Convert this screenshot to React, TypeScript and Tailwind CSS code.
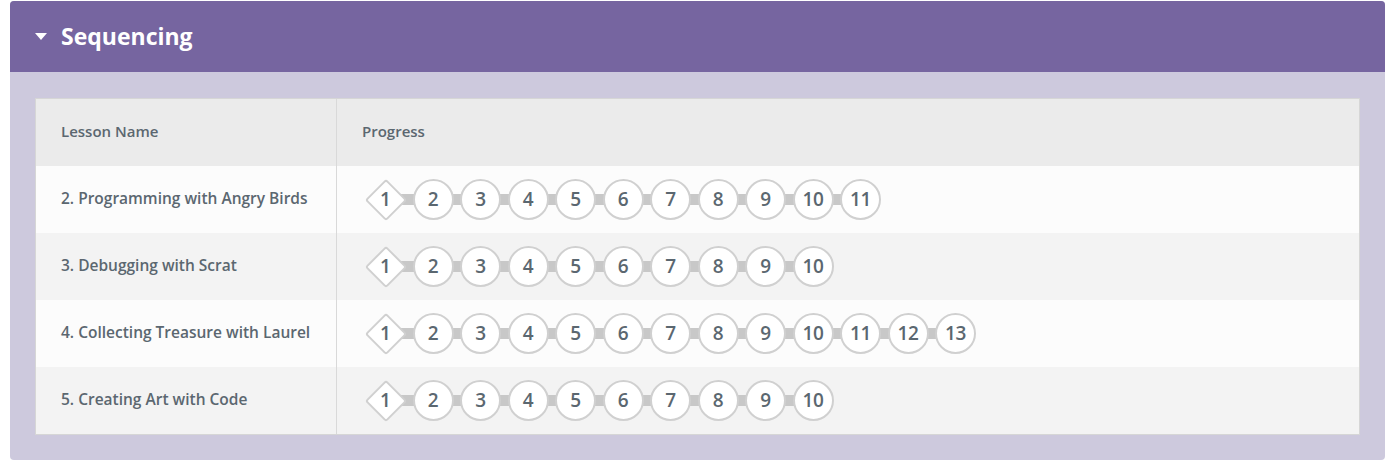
import React from "react";

const lessons = [
  { name: "2. Programming with Angry Birds", count: 11 },
  { name: "3. Debugging with Scrat", count: 10 },
  { name: "4. Collecting Treasure with Laurel", count: 13 },
  { name: "5. Creating Art with Code", count: 10 },
];

const font = { fontFamily: "'Open Sans', 'Liberation Sans', sans-serif" };

const Bubble = ({ n, first }: { n: number; first: boolean }) => {
  if (first) {
    return (
      <div className="relative w-[41px] h-[41px] flex items-center justify-center shrink-0">
        <div className="absolute w-[30px] h-[30px] rotate-45 bg-white border-2 border-[#d0d0d0] rounded-[3px]" />
        <span className="relative text-[19px] font-semibold text-[#5b6770]">{n}</span>
      </div>
    );
  }
  return (
    <div className="relative w-[41px] h-[41px] rounded-full bg-white border-2 border-[#d0d0d0] flex items-center justify-center shrink-0">
      <span className="text-[19px] font-semibold text-[#5b6770] tracking-[-0.3px]">{n}</span>
    </div>
  );
};

const Progress = ({ count }: { count: number }) => {
  const items = Array.from({ length: count }, (_, i) => i + 1);
  return (
    <div className="relative flex items-center gap-[6.5px]">
      <div className="absolute left-[20px] h-[11px] bg-[#c8c8c8]" style={{ width: (count - 1) * 47.5 }} />
      {items.map((n) => (
        <Bubble key={n} n={n} first={n === 1} />
      ))}
    </div>
  );
};

export default function App() {
  return (
    <div className="w-[1392px] h-[472px] bg-white pt-[1px] pl-[10px]" style={font}>
      <div className="w-[1375px] rounded-[4px] overflow-hidden bg-[#cdc9dd]">
        <div className="h-[71px] bg-[#7665a0] flex items-center pl-[25px] gap-[14px]">
          <svg width="12" height="8" viewBox="0 0 12 8">
            <path d="M0 0 L12 0 L6 7 Z" fill="#ffffff" />
          </svg>
          <span className="text-[23px] font-bold text-white pb-[1px]">Sequencing</span>
        </div>
        <div className="px-[25px] pt-[26px] pb-[25px]">
          <div className="border border-[#d6d6d6] text-[#5b6770]">
            <div className="flex h-[67px] bg-[#ebebeb]">
              <div className="w-[301px] border-r border-[#d9d9d9] flex items-center pl-[25px] pb-[3px] text-[15px] font-semibold">
                Lesson Name
              </div>
              <div className="flex-1 flex items-center pl-[25px] pb-[3px] text-[15px] font-semibold">Progress</div>
            </div>
            {lessons.map((l, i) => (
              <div key={l.name} className={`flex h-[67px] ${i % 2 === 0 ? "bg-[#fcfcfc]" : "bg-[#f3f3f3]"}`}>
                <div className="w-[301px] border-r border-[#d9d9d9] flex items-center pl-[25px] pb-[2px] text-[15.5px] font-semibold">
                  {l.name}
                </div>
                <div className="flex-1 flex items-center pl-[28px]">
                  <Progress count={l.count} />
                </div>
              </div>
            ))}
          </div>
        </div>
      </div>
    </div>
  );
}
